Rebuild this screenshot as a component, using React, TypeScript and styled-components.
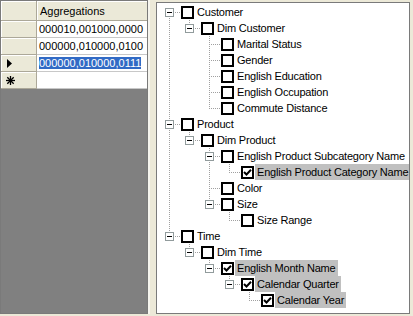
import React from "react";
import styled, { createGlobalStyle, css } from "styled-components";

const GlobalStyle = createGlobalStyle`
	html, body {
		margin: 0;
		padding: 0;
		background: #ece9d8;
	}
	body {
		font-family: "Liberation Sans", Arial, sans-serif;
		font-size: 11px;
		color: #000;
	}
`;

type TreeNode = { label: string; checked?: boolean; children?: TreeNode[] };

const tree: TreeNode[] = [
	{
		label: "Customer",
		children: [
			{
				label: "Dim Customer",
				children: [
					{ label: "Marital Status" },
					{ label: "Gender" },
					{ label: "English Education" },
					{ label: "English Occupation" },
					{ label: "Commute Distance" },
				],
			},
		],
	},
	{
		label: "Product",
		children: [
			{
				label: "Dim Product",
				children: [
					{
						label: "English Product Subcategory Name",
						children: [{ label: "English Product Category Name", checked: true }],
					},
					{ label: "Color" },
					{ label: "Size", children: [{ label: "Size Range" }] },
				],
			},
		],
	},
	{
		label: "Time",
		children: [
			{
				label: "Dim Time",
				children: [
					{
						label: "English Month Name",
						checked: true,
						children: [
							{
								label: "Calendar Quarter",
								checked: true,
								children: [{ label: "Calendar Year", checked: true }],
							},
						],
					},
				],
			},
		],
	},
];

const rows = [
	{ value: "000010,001000,0000" },
	{ value: "000000,010000,0100" },
	{ value: "000000,010000,0111", current: true },
];

type FlatNode = { node: TreeNode; guides: boolean[]; first: boolean; last: boolean };

function flatten(nodes: TreeNode[], level: number, guides: boolean[], out: FlatNode[]) {
	nodes.forEach((node, i) => {
		const last = i === nodes.length - 1;
		out.push({ node, guides, first: level === 0 && i === 0, last });
		if (node.children) flatten(node.children, level + 1, [...guides, !last], out);
	});
	return out;
}

// dotted tree lines (1 on, 1 off)
const dotsV = "repeating-linear-gradient(to bottom, #a0a0a0 0 1px, transparent 1px 2px)";
const dotsH = "repeating-linear-gradient(to right, #a0a0a0 0 1px, transparent 1px 2px)";

const Frame = styled.div`
	width: 413px;
	height: 316px;
	box-sizing: border-box;
	padding: 0 3px 2px 0;
	display: flex;
	background: #ece9d8;
`;

/* grid */

const Grid = styled.div`
	width: 148px;
	flex: none;
	box-sizing: border-box;
	border: 1px solid #7a7a7a;
	background: #808080;
	display: flex;
	flex-direction: column;
	overflow: hidden;
`;

const GridRow = styled.div<{ $head?: boolean }>`
	display: flex;
	height: ${(p) => (p.$head ? 20 : 17)}px;
	flex: none;
`;

const RowHeader = styled.div`
	width: 36px;
	flex: none;
	box-sizing: border-box;
	background: #ebe9d8;
	border-right: 1px solid #aca899;
	border-bottom: 1px solid #aca899;
	box-shadow: inset 1px 1px 0 #fff;
	display: flex;
	align-items: center;
	padding-left: 6px;
`;

const HeadCell = styled.div`
	flex: 1;
	box-sizing: border-box;
	background: #ebe9d8;
	border-bottom: 1px solid #aca899;
	box-shadow: inset 1px 1px 0 #fff;
	padding: 1px 0 0 3px;
	line-height: 18px;
`;

const Cell = styled.div`
	flex: 1;
	box-sizing: border-box;
	background: #fff;
	border-bottom: 1px solid #c8c8c8;
	padding-left: 2px;
	line-height: 16px;
	white-space: nowrap;
	overflow: hidden;
`;

const Selected = styled.span`
	background: #316ac5;
	color: #fff;
`;

const Splitter = styled.div`
	width: 8px;
	flex: none;
	box-shadow: inset 2px 0 0 #f6f5ee;
`;

/* tree */

const TreePanel = styled.div`
	width: 254px;
	flex: none;
	margin-top: 2px;
	box-sizing: border-box;
	border: 1px solid #7a7a7a;
	background: #fff;
	padding: 1px 0 0 2px;
	overflow: hidden;
	letter-spacing: -0.2px;
`;

const TreeRow = styled.div`
	display: flex;
	height: 16px;
	align-items: center;
`;

const Guide = styled.span<{ $line: boolean }>`
	width: 20px;
	height: 16px;
	flex: none;
	${(p) =>
		p.$line &&
		css`
			background: ${dotsV} 10px 0 / 1px 100% no-repeat;
		`}
`;

const Connector = styled.span<{ $up: boolean; $down: boolean }>`
	position: relative;
	width: 20px;
	height: 16px;
	flex: none;

	&::before {
		content: "";
		position: absolute;
		left: 10px;
		width: 1px;
		top: ${(p) => (p.$up ? 0 : 8)}px;
		bottom: ${(p) => (p.$down ? 0 : 8)}px;
		background: ${dotsV};
	}

	&::after {
		content: "";
		position: absolute;
		top: 8px;
		left: 10px;
		right: -1px;
		height: 1px;
		background: ${dotsH};
	}
`;

const Expander = styled.span`
	position: absolute;
	z-index: 1;
	left: 6px;
	top: 4px;
	width: 9px;
	height: 9px;
	box-sizing: border-box;
	border: 1px solid #919b9c;
	background: #fff;

	&::after {
		content: "";
		position: absolute;
		left: 1px;
		top: 3px;
		width: 5px;
		height: 1px;
		background: #000;
	}
`;

const CheckSlot = styled.span`
	width: 16px;
	flex: none;
	display: flex;
	align-items: center;
`;

const Check = styled.span`
	margin-left: 2px;
	width: 13px;
	height: 13px;
	box-sizing: border-box;
	border: 2px solid #000;
	background: #fff;
	display: flex;
	align-items: center;
	justify-content: center;
`;

const Label = styled.span<{ $selected?: boolean }>`
	padding: 0 2px;
	line-height: 16px;
	white-space: nowrap;
	background: ${(p) => (p.$selected ? "#c0c0c0" : "transparent")};
`;

const CurrentArrow = () => (
	<svg width="5" height="9" viewBox="0 0 5 9">
		<polygon points="0,0 5,4.5 0,9" fill="#000" />
	</svg>
);

const NewRowStar = () => (
	<svg width="9" height="9" viewBox="0 0 9 9" style={{ marginLeft: -1 }}>
		<g stroke="#000" strokeWidth="1.3">
			<line x1="4.5" y1="0" x2="4.5" y2="9" />
			<line x1="0" y1="4.5" x2="9" y2="4.5" />
			<line x1="1.3" y1="1.3" x2="7.7" y2="7.7" />
			<line x1="7.7" y1="1.3" x2="1.3" y2="7.7" />
		</g>
	</svg>
);

const Tick = () => (
	<svg width="9" height="9" viewBox="0 0 9 9">
		<path d="M1 4 L3.5 6.5 L8 1.8" fill="none" stroke="#000" strokeWidth="2" />
	</svg>
);

const App = () => {
	const flat = flatten(tree, 0, [], []);
	return (
		<>
			<GlobalStyle />
			<Frame>
				<Grid>
					<GridRow $head>
						<RowHeader />
						<HeadCell>Aggregations</HeadCell>
					</GridRow>
					{rows.map((r) => (
						<GridRow key={r.value}>
							<RowHeader>{r.current && <CurrentArrow />}</RowHeader>
							<Cell>{r.current ? <Selected>{r.value}</Selected> : r.value}</Cell>
						</GridRow>
					))}
					<GridRow>
						<RowHeader>
							<NewRowStar />
						</RowHeader>
						<Cell />
					</GridRow>
				</Grid>
				<Splitter />
				<TreePanel>
					{flat.map((f) => (
						<TreeRow key={f.node.label}>
							{f.guides.map((g, i) => (
								<Guide key={i} $line={g} />
							))}
							<Connector $up={!f.first} $down={!f.last}>
								{f.node.children && <Expander />}
							</Connector>
							<CheckSlot>
								<Check>{f.node.checked && <Tick />}</Check>
							</CheckSlot>
							<Label $selected={f.node.checked}>{f.node.label}</Label>
						</TreeRow>
					))}
				</TreePanel>
			</Frame>
		</>
	);
};

export default App;
